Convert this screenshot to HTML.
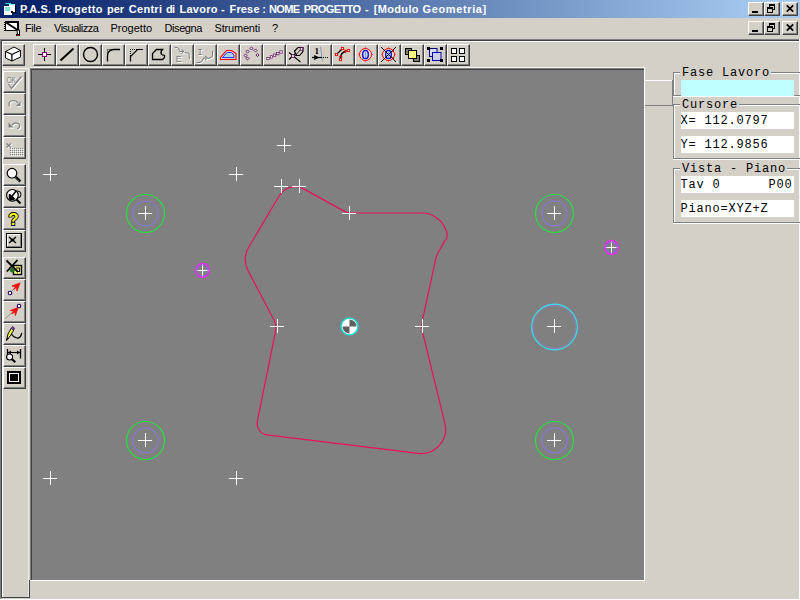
<!DOCTYPE html>
<html><head><meta charset="utf-8"><title>P.A.S.</title>
<style>
html,body{margin:0;padding:0;}
body{width:800px;height:600px;overflow:hidden;background:#d4d0c8;position:relative;font-family:"Liberation Sans",sans-serif;font-size:11px;color:#000;}
.a{position:absolute;}
#title{left:0;top:0;width:800px;height:18px;background:linear-gradient(to right,#0a246a 0%,#0a246a 4%,#a6caf0 96%,#a6caf0 100%);}
#ttext{left:20px;top:2px;height:14px;line-height:14px;color:#fff;font-weight:bold;font-size:11px;white-space:nowrap;letter-spacing:0;}
.menu{top:18px;height:21px;line-height:21px;font-size:11px;white-space:nowrap;}
.wb{width:16px;height:14px;background:#d4d0c8;box-sizing:border-box;border:1px solid;border-color:#fff #404040 #404040 #fff;box-shadow:inset -1px -1px 0 #808080;}
.tb{width:23px;height:22px;box-sizing:border-box;background:#d4d0c8;border:1px solid;border-color:#fff #404040 #404040 #fff;box-shadow:inset -1px -1px 0 #808080;}
.fld{left:681px;width:113px;height:17px;background:#fff;font-family:"Liberation Mono",monospace;font-size:12px;letter-spacing:0.8px;line-height:18px;white-space:pre;overflow:hidden;text-indent:-0.5px;}
.gl{font-family:"Liberation Mono",monospace;font-size:12px;letter-spacing:0.8px;line-height:14px;height:14px;white-space:pre;background:#d4d0c8;padding:0 1px 0 2px;left:680px;}
.grp{left:673px;width:130px;box-sizing:border-box;border:1px solid #808080;box-shadow:inset 1px 1px 0 #fff, 0 1px 0 #fff;}
</style></head><body>
<!-- title bar -->
<div id="title" class="a"></div>
<div id="ttext" class="a"><span class="a" style="left:0.00px;letter-spacing:0.125px">P.A.S. </span><span class="a" style="left:34.50px;letter-spacing:0.395px">Progetto </span><span class="a" style="left:87.00px;letter-spacing:-0.062px">per </span><span class="a" style="left:108.75px;letter-spacing:0.294px">Centri </span><span class="a" style="left:146.00px;letter-spacing:-0.780px">di </span><span class="a" style="left:159.50px;letter-spacing:0.262px">Lavoro </span><span class="a" style="left:201.00px;letter-spacing:0.000px">- </span><span class="a" style="left:209.50px;letter-spacing:0.160px">Frese </span><span class="a" style="left:242.20px;letter-spacing:0.000px">: </span><span class="a" style="left:249.00px;letter-spacing:-0.667px">NOME </span><span class="a" style="left:283.75px;letter-spacing:-0.611px">PROGETTO </span><span class="a" style="left:345.00px;letter-spacing:0.000px">- </span><span class="a" style="left:353.75px;letter-spacing:0.330px">[Modulo </span><span class="a" style="left:402.50px;letter-spacing:0.630px">Geometria] </span></div>
<div class="a wb" style="left:748px;top:2px"></div><div class="a wb" style="left:764px;top:2px"></div><div class="a wb" style="left:782px;top:2px"></div>
<div class="a wb" style="left:748px;top:21px"></div><div class="a wb" style="left:764px;top:21px"></div><div class="a wb" style="left:782px;top:21px"></div>
<!-- menu -->
<div class="a menu" style="left:25px;letter-spacing:-0.4px">File</div>
<div class="a menu" style="left:54px;letter-spacing:-0.49px">Visualizza</div>
<div class="a menu" style="left:110.5px">Progetto</div>
<div class="a menu" style="left:164.5px;letter-spacing:-0.41px">Disegna</div>
<div class="a menu" style="left:214.5px;letter-spacing:-0.18px">Strumenti</div>
<div class="a menu" style="left:272px">?</div>
<!-- client edge -->
<div class="a" style="left:0;top:39px;width:799px;height:1px;background:#808080"></div>
<div class="a" style="left:1px;top:40px;width:798px;height:1px;background:#404040"></div>
<div class="a" style="left:0;top:39px;width:1px;height:561px;background:#808080"></div>
<div class="a" style="left:1px;top:40px;width:1px;height:558px;background:#404040"></div>
<div class="a" style="left:799px;top:39px;width:1px;height:561px;background:#fff"></div>
<div class="a" style="left:0;top:599px;width:800px;height:1px;background:#fff"></div>
<div class="a" style="left:2px;top:41px;width:797px;height:1px;background:#fff"></div>
<div class="a" style="left:2px;top:41px;width:1px;height:556px;background:#fff"></div>
<div class="a" style="left:2px;top:597px;width:28px;height:1px;background:#404040"></div>
<div class="a" style="left:29px;top:580px;width:1px;height:18px;background:#404040"></div>
<div class="a" style="left:28px;top:68px;width:1px;height:529px;background:#eceae4"></div>
<div class="a" style="left:3px;top:68px;width:25px;height:1px;background:#f4f3ef"></div>
<div class="a" style="left:30px;top:67px;width:615px;height:1px;background:#f4f3ef"></div>
<!-- canvas -->
<div class="a" style="left:30px;top:68px;width:615px;height:513px;background:#fff"></div>
<div class="a" style="left:30px;top:68px;width:614px;height:512px;background:#808080"></div>
<div class="a" style="left:31px;top:69px;width:613px;height:511px;background:#404040"></div>
<div class="a" style="left:32px;top:70px;width:612px;height:510px;background:#808080"></div>
<!-- right panel -->
<div class="a" style="left:645px;top:80px;width:28px;height:1px;background:#fff"></div>
<div class="a" style="left:645px;top:105px;width:28px;height:1px;background:#808080"></div>
<div class="a" style="left:672px;top:80px;width:1px;height:26px;background:#808080"></div>
<div class="a grp" style="top:72px;height:24px"></div>
<div class="a grp" style="top:104px;height:55px"></div>
<div class="a grp" style="top:168px;height:55px"></div>
<div class="a gl" style="top:66px">Fase Lavoro</div>
<div class="a gl" style="top:98px">Cursore</div>
<div class="a gl" style="top:162px">Vista - Piano</div>
<div class="a fld" style="top:80px;height:16px;background:#bfffff"></div>
<div class="a fld" style="top:112px">X= 112.0797</div>
<div class="a fld" style="top:136px">Y= 112.9856</div>
<div class="a fld" style="top:176px">Tav 0      P00</div>
<div class="a fld" style="top:200px">Piano=XYZ+Z</div>
<!--TB0-->
<div class="a tb" style="left:2px;top:44px"></div>
<div class="a tb" style="left:33px;top:44px"></div>
<div class="a tb" style="left:56px;top:44px"></div>
<div class="a tb" style="left:79px;top:44px"></div>
<div class="a tb" style="left:102px;top:44px"></div>
<div class="a tb" style="left:125px;top:44px"></div>
<div class="a tb" style="left:148px;top:44px"></div>
<div class="a tb" style="left:171px;top:44px"></div>
<div class="a tb" style="left:194px;top:44px"></div>
<div class="a tb" style="left:217px;top:44px"></div>
<div class="a tb" style="left:240px;top:44px"></div>
<div class="a tb" style="left:263px;top:44px"></div>
<div class="a tb" style="left:286px;top:44px"></div>
<div class="a tb" style="left:309px;top:44px"></div>
<div class="a tb" style="left:332px;top:44px"></div>
<div class="a tb" style="left:355px;top:44px"></div>
<div class="a tb" style="left:378px;top:44px"></div>
<div class="a tb" style="left:401px;top:44px"></div>
<div class="a tb" style="left:424px;top:44px"></div>
<div class="a tb" style="left:447px;top:44px"></div>
<div class="a tb" style="left:3px;top:71px"></div>
<div class="a tb" style="left:3px;top:93px"></div>
<div class="a tb" style="left:3px;top:115px"></div>
<div class="a tb" style="left:3px;top:137px"></div>
<div class="a tb" style="left:3px;top:164px"></div>
<div class="a tb" style="left:3px;top:186px"></div>
<div class="a tb" style="left:3px;top:208px"></div>
<div class="a tb" style="left:3px;top:230px"></div>
<div class="a tb" style="left:3px;top:257px"></div>
<div class="a tb" style="left:3px;top:279px"></div>
<div class="a tb" style="left:3px;top:301px"></div>
<div class="a tb" style="left:3px;top:323px"></div>
<div class="a tb" style="left:3px;top:345px"></div>
<div class="a tb" style="left:3px;top:367px"></div>
<!--TB1-->
<!--SVG0-->
<svg class="a" style="left:0;top:0" width="800" height="600" viewBox="0 0 800 600">
<g id="cv" fill="none">
<path d="M275.6,331.2 A16.8,16.8 0 0 0 274.0,320.0 L248.3,271.2 A25.0,25.0 0 0 1 248.9,246.8 L279.1,196.0 A18.6,18.6 0 0 1 304.1,189.1 L345.1,211.6 A11.7,11.7 0 0 0 350.7,213.0 L424.0,213.0 C426.0,213.2 428.2,213.7 430.0,214.3 C431.8,214.9 433.3,215.7 435.0,216.8 C436.7,217.9 438.5,219.2 440.0,220.7 C441.5,222.2 442.9,224.2 444.0,226.0 C445.1,227.8 445.9,230.0 446.5,231.5 C447.1,233.0 447.3,233.8 447.3,235.0 C447.3,236.2 446.9,237.6 446.3,239.0 C445.7,240.4 444.6,241.4 443.5,243.2 C442.4,244.9 441.0,247.7 440.0,249.5 C439.0,251.3 438.2,252.6 437.5,254.0 C436.8,255.4 436.5,255.9 436.0,257.7 C435.5,259.5 434.9,262.6 434.4,265.0 L422.5,320.0 A28.2,28.2 0 0 0 422.7,332.7 L444.9,423.5 A24.2,24.2 0 0 1 418.4,453.3 L266.8,434.8 A11.1,11.1 0 0 1 257.3,421.6 Z" stroke="#e8105c" stroke-width="1.2"/>
<circle cx="145.5" cy="213.5" r="19" stroke="#28e040" stroke-width="1.2"/>
<circle cx="145.5" cy="213.5" r="12.5" stroke="#8478d8" stroke-width="1.2"/>
<circle cx="554.5" cy="213.5" r="19" stroke="#28e040" stroke-width="1.2"/>
<circle cx="554.5" cy="213.5" r="12.5" stroke="#8478d8" stroke-width="1.2"/>
<circle cx="145.5" cy="440.5" r="19" stroke="#28e040" stroke-width="1.2"/>
<circle cx="145.5" cy="440.5" r="12.5" stroke="#8478d8" stroke-width="1.2"/>
<circle cx="554.5" cy="440.5" r="19" stroke="#28e040" stroke-width="1.2"/>
<circle cx="554.5" cy="440.5" r="12.5" stroke="#8478d8" stroke-width="1.2"/>
<circle cx="554.5" cy="327" r="22.8" stroke="#38e0f0" stroke-width="1.2"/>
<circle cx="554.5" cy="327" r="21.4" stroke="#8c80d0" stroke-width="1" opacity="0.7"/>
<circle cx="349.5" cy="326.5" r="8.5" fill="#fff" stroke="#20d8d0" stroke-width="1.6"/>
<path d="M349.5,326.5V319.5A7,7 0 0 1 356.5,326.5Z M349.5,326.5V333.5A7,7 0 0 1 342.5,326.5Z" fill="#606060"/>
<g stroke="#fff" stroke-width="1" shape-rendering="crispEdges">
<path d="M43,174.5H57M50.5,167V181"/>
<path d="M229,174.5H243M236.5,167V181"/>
<path d="M277,145.5H291M284.5,138V152"/>
<path d="M274,186.5H288M281.5,179V193"/>
<path d="M292,186.5H306M299.5,179V193"/>
<path d="M342,213.5H356M349.5,206V220"/>
<path d="M270,326.5H284M277.5,319V333"/>
<path d="M415,326.5H429M422.5,319V333"/>
<path d="M43,478.5H57M50.5,471V485"/>
<path d="M229,478.5H243M236.5,471V485"/>
<path d="M138,213.5H152M145.5,206V220"/>
<path d="M547,213.5H561M554.5,206V220"/>
<path d="M138,440.5H152M145.5,433V447"/>
<path d="M547,440.5H561M554.5,433V447"/>
<path d="M547,326.5H561M554.5,319V333"/>
<path d="M195,270.5H209M202.5,263V277"/>
<path d="M604,247.5H618M611.5,240V254"/>
</g>
<circle cx="202.5" cy="270.5" r="5.4" stroke="#8868e0" stroke-width="1.2" opacity="0.8"/>
<circle cx="202.5" cy="270.5" r="6.9" stroke="#e030e8" stroke-width="1.5"/>
<circle cx="611.5" cy="247.5" r="5.4" stroke="#8868e0" stroke-width="1.2" opacity="0.8"/>
<circle cx="611.5" cy="247.5" r="6.9" stroke="#e030e8" stroke-width="1.5"/>
</g>
<!--IC0-->
<g id="ticon"><path d="M5.5,3.5H11" stroke="#40e0d0" stroke-width="1"/><path d="M9,4.5H15" stroke="#80ffff" stroke-width="1"/><rect x="9" y="5" width="7" height="8" fill="#000"/><rect x="9" y="5" width="6" height="7" fill="#fff"/><rect x="4" y="6" width="8" height="9" fill="#fff"/><rect x="5" y="7" width="5" height="4" fill="#80e0d8"/><rect x="11" y="11" width="2" height="2" fill="#000"/></g>
<g id="micon"><rect x="5.5" y="21.5" width="12.5" height="9" fill="#fff" stroke="#000" stroke-width="1"/><path d="M5,21H19V23H5Z" fill="#000"/><path d="M17,21H19V31H17Z" fill="#000"/><path d="M6,22.5L17.5,30" stroke="#000" stroke-width="1.8" fill="none"/><path d="M4.5,22V31" stroke="#000" stroke-width="1" stroke-dasharray="1,1"/><path d="M17,30L19.5,30V35H17.5Z" fill="#fff" stroke="#000" stroke-width="1"/><rect x="16" y="34" width="4" height="2" fill="#000"/><rect x="17" y="35" width="2" height="1" fill="#c00000"/></g>
<g fill="#000" shape-rendering="crispEdges"><rect x="752" y="11" width="6" height="2"/><rect x="769" y="4" width="6" height="2"/><rect x="774" y="4" width="1" height="6"/><rect x="769" y="4" width="1" height="3"/><rect x="773" y="9" width="2" height="1"/><rect x="767" y="7" width="6" height="2"/><rect x="767" y="7" width="1" height="6"/><rect x="772" y="7" width="1" height="6"/><rect x="767" y="12" width="6" height="1"/></g><path d="M786.8,5.4L793.2,11.6M793.2,5.4L786.8,11.6" stroke="#000" stroke-width="1.7" fill="none"/>
<g fill="#000" shape-rendering="crispEdges"><rect x="752" y="30" width="6" height="2"/><rect x="769" y="23" width="6" height="2"/><rect x="774" y="23" width="1" height="6"/><rect x="769" y="23" width="1" height="3"/><rect x="773" y="28" width="2" height="1"/><rect x="767" y="26" width="6" height="2"/><rect x="767" y="26" width="1" height="6"/><rect x="772" y="26" width="1" height="6"/><rect x="767" y="31" width="6" height="1"/></g><path d="M786.8,24.4L793.2,30.6M793.2,24.4L786.8,30.6" stroke="#000" stroke-width="1.7" fill="none"/>
<g stroke="#000" stroke-width="1" fill="#fff" stroke-linejoin="round"><path d="M14,47L20.5,50.5L12,54.5L5.5,51.5Z"/><path d="M5.5,51.5L12,54.5V61L5.5,58Z"/><path d="M12,54.5L20.5,50.5V57L12,61Z"/></g>
<path d="M38,54.5H51M44.5,48V61" stroke="#000" stroke-width="1" shape-rendering="crispEdges"/><rect x="42" y="52" width="5" height="5" fill="#800080"/><rect x="43" y="53" width="3" height="3" fill="#fff"/>
<path d="M60.5,60.5L73.5,48.5" stroke="#000" fill="none" stroke-width="1.9"/>
<circle cx="90.5" cy="54.5" r="7" stroke="#000" fill="none" stroke-width="1.4"/>
<path d="M107.5,61.5V55.5A6,6 0 0 1 113.5,49.5H120" stroke="#000" fill="none" stroke-width="1.3"/><path d="M107.5,54.5V49.5H113" stroke="#000" fill="none" stroke-width="1" stroke-dasharray="1,1"/>
<path d="M130.5,61.5V56.5L137.5,49.5H143" stroke="#000" fill="none" stroke-width="1.2"/><path d="M130.5,56V49.5H137" stroke="#000" fill="none" stroke-width="1" stroke-dasharray="1,1"/>
<path d="M152.5,59.5V53.5L156.5,49.5H162.5Q160,52 161.5,54.5L164.5,55.5V57.5L162.5,59.5Z" stroke="#000" fill="none" stroke-width="1.3"/>
<g transform="translate(1,1)" stroke="#fff" fill="#fff"><path d="M174.5,47.5H177Q179.5,48 179.5,51.5H184" fill="none"/><path d="M181.5,49.5L184,51.5L181.5,53.5" fill="none"/><path d="M184.5,52.5L189,53.3L189.5,59" fill="none"/><text x="175.8" y="61.5" font-family="Liberation Sans,sans-serif" font-size="9" stroke="none">E</text></g><g stroke="#808080" fill="#808080"><path d="M174.5,47.5H177Q179.5,48 179.5,51.5H184" fill="none"/><path d="M181.5,49.5L184,51.5L181.5,53.5" fill="none"/><path d="M184.5,52.5L189,53.3L189.5,59" fill="none"/><text x="175.8" y="61.5" font-family="Liberation Sans,sans-serif" font-size="9" stroke="none">E</text></g>
<g transform="translate(1,1)" stroke="#fff" fill="#fff"><text x="197.3" y="54.8" font-family="Liberation Mono,monospace" font-size="9.5" stroke="none">I</text><path d="M196.5,62.5H200Q203,61.5 203.5,58H207.5" fill="none"/><path d="M205,56L207.5,58L205,60" fill="none"/><path d="M208,58.8L212.5,56.5V51" fill="none"/></g><g stroke="#808080" fill="#808080"><text x="197.3" y="54.8" font-family="Liberation Mono,monospace" font-size="9.5" stroke="none">I</text><path d="M196.5,62.5H200Q203,61.5 203.5,58H207.5" fill="none"/><path d="M205,56L207.5,58L205,60" fill="none"/><path d="M208,58.8L212.5,56.5V51" fill="none"/></g>
<path d="M222.5,57.5L227,52.5H231.5L234,55V57.5Z" fill="#a8d0f0" stroke="#2020ff" stroke-width="0.9"/><path d="M220.5,59.5V57.5L226.5,50.5H231.5L236,53.5V59.5Z" fill="none" stroke="#ff0000" stroke-width="1.1"/>
<rect x="246.4" y="57.4" width="2.2" height="2.2" fill="#f0e0f0" stroke="#500050" stroke-width="0.8" transform="rotate(45 247.5 58.5)"/>
<rect x="244.4" y="54.4" width="2.2" height="2.2" fill="#f0e0f0" stroke="#500050" stroke-width="0.8" transform="rotate(45 245.5 55.5)"/>
<rect x="246.4" y="50.4" width="2.2" height="2.2" fill="#f0e0f0" stroke="#500050" stroke-width="0.8" transform="rotate(45 247.5 51.5)"/>
<rect x="250.4" y="47.4" width="2.2" height="2.2" fill="#f0e0f0" stroke="#500050" stroke-width="0.8" transform="rotate(45 251.5 48.5)"/>
<rect x="254.4" y="49.4" width="2.2" height="2.2" fill="#f0e0f0" stroke="#500050" stroke-width="0.8" transform="rotate(45 255.5 50.5)"/>
<rect x="256.4" y="53.9" width="2.2" height="2.2" fill="#f0e0f0" stroke="#500050" stroke-width="0.8" transform="rotate(45 257.5 55)"/>
<path d="M268,58.6L281,52" stroke="#905090" stroke-width="0.7" fill="none"/>
<rect x="266.8" y="57.4" width="2.4" height="2.4" fill="#f8e8f8" stroke="#500050" stroke-width="0.6"/>
<rect x="270.2" y="55.699999999999996" width="2.4" height="2.4" fill="#f8e8f8" stroke="#500050" stroke-width="0.6"/>
<rect x="273.40000000000003" y="54.0" width="2.4" height="2.4" fill="#f8e8f8" stroke="#500050" stroke-width="0.6"/>
<rect x="276.6" y="52.5" width="2.4" height="2.4" fill="#f8e8f8" stroke="#500050" stroke-width="0.6"/>
<rect x="279.8" y="50.8" width="2.4" height="2.4" fill="#f8e8f8" stroke="#500050" stroke-width="0.6"/>
<path d="M289,52.5L300.5,62M289,59.5L296,53" stroke="#000" fill="none" stroke-width="1.1"/><path d="M294.5,51L298,47.5H303V51.5L299.5,55.5H296.5Z" stroke="#000" fill="none" stroke-width="1.1"/><path d="M295,56L301,49" stroke="#000" fill="none" stroke-width="0.8"/><rect x="291.7" y="54.7" width="2.6" height="2.6" fill="#fff" stroke="#500050" stroke-width="0.8"/><rect x="300.2" y="47.7" width="2.6" height="2.6" fill="#fff" stroke="#500050" stroke-width="0.8"/>
<path d="M320.5,47L322.5,61.5" stroke="#80a0c0" stroke-width="1" fill="none"/><path d="M324.5,47L323,61" stroke="#e0c8a0" stroke-width="1" fill="none"/><text x="314.5" y="53.5" font-family="Liberation Serif,serif" font-size="9" font-weight="bold" fill="#000">1</text><path d="M312,57.5H322" stroke="#000" stroke-width="1.2"/><path d="M314.5,55.5L318.5,57.5L314.5,59.5Z" fill="#000" stroke="#000" stroke-width="0.8"/><path d="M323,57.5H328" stroke="#000" stroke-width="1" stroke-dasharray="1,1"/>
<path d="M336.5,54.5L342.5,48.5" stroke="#000" fill="none" stroke-width="1.3"/><path d="M340.5,58.5Q340.5,52.5 346,51" stroke="#000" fill="none" stroke-width="1.6"/><path d="M344.5,49L347.5,51L345,53.5Z" fill="#e00000"/><path d="M338.5,56.5L341,55L343,57.5Z" fill="#e00000"/>
<rect x="335.4" y="53.4" width="2.2" height="2.2" fill="#fff" stroke="#e00000" stroke-width="0.9"/>
<rect x="341.4" y="47.4" width="2.2" height="2.2" fill="#fff" stroke="#e00000" stroke-width="0.9"/>
<rect x="339.4" y="58.4" width="2.2" height="2.2" fill="#fff" stroke="#e00000" stroke-width="0.9"/>
<rect x="347.4" y="49.4" width="2.2" height="2.2" fill="#fff" stroke="#e00000" stroke-width="0.9"/>
<path d="M358.0,54.5H373.0M365.5,47.0V62.0" stroke="#ff4040" stroke-width="0.8" fill="none"/><circle cx="365.5" cy="54.5" r="6" fill="#e4dcd8" stroke="#ff0000" stroke-width="1"/><ellipse cx="365.5" cy="54.5" rx="2.8" ry="4.2" fill="#c8dcf8" stroke="#0000d0" stroke-width="1.3"/><path d="M365.5,50.5V58.5" stroke="#6080ff" stroke-width="0.7"/>
<path d="M381.0,54.5H396.0M388.5,47.0V62.0" stroke="#ff4040" stroke-width="0.8" fill="none"/><circle cx="388.5" cy="54.5" r="6" fill="#e4dcd8" stroke="#ff0000" stroke-width="1"/><ellipse cx="388.5" cy="54.5" rx="2.8" ry="4.2" fill="#c8dcf8" stroke="#0000d0" stroke-width="1.3"/><path d="M388.5,50.5V58.5" stroke="#6080ff" stroke-width="0.7"/><path d="M381.0,47.0L396.0,62.0M396.0,47.0L381.0,62.0" stroke="#000" stroke-width="1" fill="none"/><circle cx="393.0" cy="51.0" r="1" fill="#a00000"/><circle cx="393.0" cy="58.0" r="1" fill="#a00000"/>
<g stroke="#000" stroke-width="1"><rect x="405.5" y="48.5" width="6" height="6" fill="#808070"/><rect x="413.5" y="55.5" width="6" height="6" fill="#808070"/><rect x="408.5" y="50.5" width="8" height="8" fill="#ffff80"/></g>
<rect x="429.5" y="48.5" width="7.5" height="8" fill="#d8d8f0" stroke="#000080" stroke-width="1"/><rect x="432.5" y="52.5" width="8.5" height="8" fill="#d0d0e8" stroke="#0000c0" stroke-width="1"/><g fill="#000"><rect x="427" y="47" width="3" height="3"/><rect x="440" y="47" width="3" height="3"/><rect x="427" y="59" width="3" height="3"/><rect x="440" y="59" width="3" height="3"/></g>
<g fill="#fff" stroke="#000" stroke-width="1"><rect x="451.5" y="48.5" width="5" height="5"/><rect x="451.5" y="56.5" width="5" height="5"/><rect x="459.5" y="48.5" width="5" height="5"/><rect x="459.5" y="56.5" width="5" height="5"/></g>
<g transform="translate(1,1)" stroke="#fff" fill="#fff"><text x="6.5" y="82.5" font-family="Liberation Sans,sans-serif" font-size="8.5" stroke="none" textLength="9.5" lengthAdjust="spacingAndGlyphs">OK</text><path d="M8.5,84L11.5,88.5L21.5,76.5" fill="none" stroke-width="1.3"/></g><g stroke="#808080" fill="#808080"><text x="6.5" y="82.5" font-family="Liberation Sans,sans-serif" font-size="8.5" stroke="none" textLength="9.5" lengthAdjust="spacingAndGlyphs">OK</text><path d="M8.5,84L11.5,88.5L21.5,76.5" fill="none" stroke-width="1.3"/></g>
<g transform="translate(1,1)" stroke="#fff" fill="#fff"><path d="M9.5,106.5Q7.5,101 13,100.5Q16.5,100.5 18,103" fill="none" stroke-width="1.2"/><path d="M20.5,101.5V106H16Z" stroke="none"/></g><g stroke="#808080" fill="#808080"><path d="M9.5,106.5Q7.5,101 13,100.5Q16.5,100.5 18,103" fill="none" stroke-width="1.2"/><path d="M20.5,101.5V106H16Z" stroke="none"/></g>
<g transform="translate(1,1)" stroke="#fff" fill="#fff"><path d="M12,125Q15,121.5 18.5,123.5Q21.5,126.5 17.5,129" fill="none" stroke-width="1.2"/><path d="M8.5,122.5V127.5H13.5Z" stroke="none"/></g><g stroke="#808080" fill="#808080"><path d="M12,125Q15,121.5 18.5,123.5Q21.5,126.5 17.5,129" fill="none" stroke-width="1.2"/><path d="M8.5,122.5V127.5H13.5Z" stroke="none"/></g>
<g transform="translate(1,1)" stroke="#fff" fill="#fff"><path d="M6.5,143.5L11,147.5M11,143.5L6.5,147.5" fill="none" stroke-width="1.2"/><rect x="10" y="148" width="1" height="1" stroke="none"/><rect x="10" y="150" width="1" height="1" stroke="none"/><rect x="10" y="152" width="1" height="1" stroke="none"/><rect x="10" y="154" width="1" height="1" stroke="none"/><rect x="12" y="148" width="1" height="1" stroke="none"/><rect x="12" y="150" width="1" height="1" stroke="none"/><rect x="12" y="152" width="1" height="1" stroke="none"/><rect x="12" y="154" width="1" height="1" stroke="none"/><rect x="14" y="148" width="1" height="1" stroke="none"/><rect x="14" y="150" width="1" height="1" stroke="none"/><rect x="14" y="152" width="1" height="1" stroke="none"/><rect x="14" y="154" width="1" height="1" stroke="none"/><rect x="16" y="148" width="1" height="1" stroke="none"/><rect x="16" y="150" width="1" height="1" stroke="none"/><rect x="16" y="152" width="1" height="1" stroke="none"/><rect x="16" y="154" width="1" height="1" stroke="none"/><rect x="18" y="148" width="1" height="1" stroke="none"/><rect x="18" y="150" width="1" height="1" stroke="none"/><rect x="18" y="152" width="1" height="1" stroke="none"/><rect x="18" y="154" width="1" height="1" stroke="none"/><rect x="20" y="148" width="1" height="1" stroke="none"/><rect x="20" y="150" width="1" height="1" stroke="none"/><rect x="20" y="152" width="1" height="1" stroke="none"/><rect x="20" y="154" width="1" height="1" stroke="none"/><rect x="22" y="148" width="1" height="1" stroke="none"/><rect x="22" y="150" width="1" height="1" stroke="none"/><rect x="22" y="152" width="1" height="1" stroke="none"/><rect x="22" y="154" width="1" height="1" stroke="none"/></g><g stroke="#808080" fill="#808080"><path d="M6.5,143.5L11,147.5M11,143.5L6.5,147.5" fill="none" stroke-width="1.2"/><rect x="10" y="148" width="1" height="1" stroke="none"/><rect x="10" y="150" width="1" height="1" stroke="none"/><rect x="10" y="152" width="1" height="1" stroke="none"/><rect x="10" y="154" width="1" height="1" stroke="none"/><rect x="12" y="148" width="1" height="1" stroke="none"/><rect x="12" y="150" width="1" height="1" stroke="none"/><rect x="12" y="152" width="1" height="1" stroke="none"/><rect x="12" y="154" width="1" height="1" stroke="none"/><rect x="14" y="148" width="1" height="1" stroke="none"/><rect x="14" y="150" width="1" height="1" stroke="none"/><rect x="14" y="152" width="1" height="1" stroke="none"/><rect x="14" y="154" width="1" height="1" stroke="none"/><rect x="16" y="148" width="1" height="1" stroke="none"/><rect x="16" y="150" width="1" height="1" stroke="none"/><rect x="16" y="152" width="1" height="1" stroke="none"/><rect x="16" y="154" width="1" height="1" stroke="none"/><rect x="18" y="148" width="1" height="1" stroke="none"/><rect x="18" y="150" width="1" height="1" stroke="none"/><rect x="18" y="152" width="1" height="1" stroke="none"/><rect x="18" y="154" width="1" height="1" stroke="none"/><rect x="20" y="148" width="1" height="1" stroke="none"/><rect x="20" y="150" width="1" height="1" stroke="none"/><rect x="20" y="152" width="1" height="1" stroke="none"/><rect x="20" y="154" width="1" height="1" stroke="none"/><rect x="22" y="148" width="1" height="1" stroke="none"/><rect x="22" y="150" width="1" height="1" stroke="none"/><rect x="22" y="152" width="1" height="1" stroke="none"/><rect x="22" y="154" width="1" height="1" stroke="none"/></g>
<circle cx="12" cy="173.2" r="4.8" fill="#fff" stroke="#000" stroke-width="1.2"/><path d="M15.8,177L20.3,181.5" stroke="#000" stroke-width="2.6" fill="none"/><path d="M16.5,178.5L19.5,181.5" stroke="#d4d0c8" stroke-width="0.6" stroke-dasharray="1,1" fill="none"/>
<circle cx="17.5" cy="194.5" r="3.5" fill="none" stroke="#000" stroke-width="1"/><circle cx="12.4" cy="195.3" r="5.8" fill="#fff" stroke="#000" stroke-width="1.2"/><path d="M16,191L9.5,199.5M9.5,199.5V194M9.5,199.5H14.5" stroke="#000" stroke-width="1.5" fill="none"/><path d="M9.5,199.5L10,194L13,196.5L15.5,199Z" fill="#000"/><path d="M16.5,199.5L20.5,203.5" stroke="#000" stroke-width="2.2" fill="none"/>
<text x="8.2" y="225.3" font-family="Liberation Sans,sans-serif" font-size="17" font-weight="bold" fill="#ffff00" stroke="#000" stroke-width="1.8" paint-order="stroke" stroke-linejoin="round">?</text>
<rect x="6.5" y="233.5" width="15" height="14" fill="#d4d0c8" stroke="#000" stroke-width="1"/><path d="M7.5,246.5V234.5H20.5" stroke="#fff" fill="none"/><path d="M7.5,246.5H20.5V234.5" stroke="#808080" fill="none"/><path d="M9,237L16,243M16,237L9,243" stroke="#000" stroke-width="1.4" fill="none"/><path d="M10,239.9L12.5,238.5V241.5ZM15,239.9L12.5,238.5V241.5Z" fill="#000"/>
<rect x="13.5" y="265.5" width="8" height="9" fill="#ffff80" stroke="#000" stroke-width="1.4"/><path d="M16,268H19.5V271.5H17" stroke="#000" fill="none" stroke-width="1.2"/><path d="M6.5,260.5L18,272M17.5,260L6.8,271.5" stroke="#000" stroke-width="1.8" fill="none"/><circle cx="12.3" cy="270.3" r="2.4" fill="#207020"/>
<path d="M10,293L20.5,282.5" stroke="#707070" stroke-width="0.8" fill="none"/><path d="M20,283.0L12,286.0L15.5,286.5L13.5,289.5L16.5,287.3L17,291.0Z" fill="#f01010" stroke="#f01010" stroke-width="0.9" stroke-linejoin="round"/><circle cx="10" cy="293" r="1.8" fill="#fff" stroke="#200060" stroke-width="1.1"/>
<path d="M5.5,318.5L19,306" stroke="#709070" stroke-width="0.8" fill="none"/><path d="M18.3,307.5L10.3,310.5L13.8,311L11.8,314L14.8,311.8L15.3,315.5Z" fill="#f01010" stroke="#f01010" stroke-width="0.9" stroke-linejoin="round"/><circle cx="19" cy="306" r="1.8" fill="#fff" stroke="#200060" stroke-width="1.1"/>
<path d="M11,333.5Q13.5,337.5 17,338T21.8,333" stroke="#000" stroke-width="1.2" fill="none"/><path d="M6.5,340.5L8,334L11.5,328L14,329.5L10.5,335.5Z" fill="#ffff40" stroke="#000" stroke-width="1"/><path d="M11,328.5L12.5,326.5L14.5,328L13.5,329.8Z" fill="#8040a0" stroke="#402060" stroke-width="0.8"/><path d="M6.5,340.5L7.2,337.5L9,338.5Z" fill="#000"/>
<path d="M7.5,349V358.5M20.5,349V358.5" stroke="#000" stroke-width="1.3" fill="none"/><path d="M8,352.5H20" stroke="#000" stroke-width="1.1"/><path d="M8,352.5L11,350.5V354.5ZM20,352.5L17,350.5V354.5Z" fill="#000"/><circle cx="9.6" cy="357" r="3" fill="#fff" stroke="#000" stroke-width="1.1"/><path d="M12,359.2L15.3,362.2" stroke="#000" stroke-width="2.2" fill="none"/>
<rect x="7" y="371" width="14" height="13" fill="#000"/><rect x="9" y="373" width="10" height="9" fill="#fff"/><rect x="10" y="374" width="8" height="7" fill="#000"/>
<!--IC1-->
</svg>
<!--SVG1-->
</body></html>
